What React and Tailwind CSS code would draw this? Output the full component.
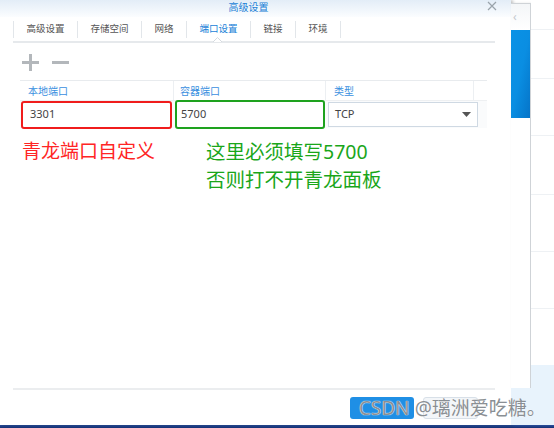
import React from 'react';

const cjk = { fontFamily: '"Noto Sans", "Noto Sans CJK SC", sans-serif' };
const tabs = ['高级设置', '存储空间', '网络', '端口设置', '链接', '环境'];

function Tab({ label, active }) {
  return (
    <div className="relative flex h-full items-center">
      <div
        className={`px-[12.5px] text-[9.5px] leading-none ${active ? 'text-[#1a82d8]' : 'text-[#555]'}`}
      >
        {label}
      </div>
      <div className="h-[17px] w-px bg-[#e2e6ea]" />
      {active && (
        <div className="absolute bottom-[-1px] left-[26px] h-[5px] w-[9px]">
          <svg width="9" height="5" viewBox="0 0 9 5">
            <path d="M0 5 L4.5 0.5 L9 5" fill="#fff" stroke="#d6dbe0" strokeWidth="1" />
          </svg>
        </div>
      )}
    </div>
  );
}

function Dialog() {
  return (
    <div className="flex h-[425px] w-[511px] flex-col bg-white shadow-[2px_0_3px_rgba(0,0,0,0.25)]">
      {/* title bar */}
      <div className="flex h-[17px] items-start bg-gradient-to-b from-[#e3edf7] to-[#fbfdff]">
        <div className="flex-1" />
        <div className="pt-[1px] text-[10px] leading-[12px] text-[#1a7fd6]">高级设置</div>
        <div className="flex flex-1 justify-end pr-[14px] pt-[1px]">
          <svg width="10" height="10" viewBox="0 0 10 10">
            <path d="M1 1 L9 9 M9 1 L1 9" stroke="#9aa3ab" strokeWidth="1.2" />
          </svg>
        </div>
      </div>

      {/* tabs */}
      <div className="mx-[13px] flex h-[26px] w-[482px] items-center border-b-2 border-[#e6e9ec]">
        <div className="h-[17px] w-px bg-[#e2e6ea]" />
        {tabs.map((t) => (
          <Tab key={t} label={t} active={t === '端口设置'} />
        ))}
      </div>

      {/* toolbar */}
      <div className="flex items-center gap-[13px] pl-[22px] pt-[11px]">
        <svg width="17" height="17" viewBox="0 0 17 17">
          <path d="M8.5 0 V17 M0 8.5 H17" stroke="#b3b7bb" strokeWidth="3" />
        </svg>
        <svg width="17" height="17" viewBox="0 0 17 17">
          <path d="M0 8.5 H17" stroke="#b3b7bb" strokeWidth="3" />
        </svg>
      </div>

      {/* table */}
      <div className="ml-[20px] mt-[9px] w-[467px] border-t border-[#e8ebee]">
        <div className="flex h-[20px] border-b border-[#eef0f2] text-[10px] leading-none text-[#3a8fe0]">
          <div className="flex w-[154px] items-center border-r border-[#eceff2] pl-[8px]">本地端口</div>
          <div className="flex w-[152px] items-center border-r border-[#eceff2] pl-[6px]">容器端口</div>
          <div className="flex w-[148px] items-center border-r border-[#eceff2] pl-[8px]">类型</div>
          <div className="flex-1" />
        </div>
        <div className="flex h-[27px] items-center bg-[#fafbfc] text-[11px] text-[#444]">
          <div className="ml-[1px] flex h-[28px] w-[151px] items-center rounded-[3px] border-2 border-[#f01c1c] bg-white pl-[7px]">
            3301
          </div>
          <div className="ml-[3px] flex h-[29px] w-[150px] items-center rounded-[3px] border-2 border-[#1ea21e] bg-white pl-[4px]">
            5700
          </div>
          <div className="ml-[3px] flex h-[25px] w-[150px] items-center justify-between border border-[#cfd9e3] bg-white pl-[6px] pr-[6px]">
            <span>TCP</span>
            <svg width="9" height="5" viewBox="0 0 9 5">
              <path d="M0 0 H9 L4.5 5 Z" fill="#555" />
            </svg>
          </div>
        </div>
      </div>

      {/* annotations */}
      <div className="flex pt-[9px] text-[19px] leading-[28px]">
        <div className="w-[206px] pl-[22px] text-[#ff2525]">青龙端口自定义</div>
        <div className="pt-[1px] text-[19.5px] text-[#1aa61a]">
          <div>这里必须填写5700</div>
          <div>否则打不开青龙面板</div>
        </div>
      </div>

      <div className="flex-1" />

      {/* footer */}
      <div className="mx-[13px] w-[482px] border-t-2 border-[#ebedef]" />
      <div className="flex h-[35px] items-start pl-[350px] pt-[7px]">
        <div className="relative flex">
          <div className="h-[22px] w-[64px] rounded-[3px] bg-[#1f8fe5]" />
          <div className="ml-[9px] h-[22px] w-[55px] rounded-[3px] border border-[#d8e0e8] bg-[#f3f6f9]" />
          <div
            className="absolute left-[9px] top-[-3px] whitespace-nowrap text-[19px] leading-[28px] text-[#8a8f94] [text-shadow:0_0_1px_#fff,0_0_1px_#fff]"
          >
            CSDN @璃洲爱吃糖。
          </div>
        </div>
      </div>
    </div>
  );
}

function BackWindow() {
  return (
    <div className="flex h-[425px] w-[20px] flex-col">
      <div className="mt-[3px] flex h-[385px] flex-col border-r border-t border-[#cfd3d7] bg-white shadow-[2px_1px_3px_rgba(0,0,0,0.2)]">
        <div className="flex h-[26px] items-center bg-gradient-to-b from-[#f4f6f8] to-[#ffffff] pl-[2px] text-[12px] text-[#c5c9cd]">
          ‹
        </div>
        <div className="h-[88px] bg-gradient-to-br from-[#0a92e6] via-[#0a8ee2] to-[#0674c8]" />
        <div className="flex-1" />
      </div>
      <div className="flex-1 bg-[#e8f3fc]" />
    </div>
  );
}

function PageStrip() {
  const rows = [30, 49, 57, 59, 57, 57];
  return (
    <div className="flex h-[425px] flex-1 flex-col bg-white">
      {rows.map((h, i) => (
        <div key={i} className="border-b border-[#eef1f4]" style={{ height: h }} />
      ))}
      <div className="h-[56px]" />
      <div className="flex-1 bg-[#e8f3fc]" />
    </div>
  );
}

export default function App() {
  return (
    <div className="h-[428px] w-[554px] overflow-hidden bg-white" style={cjk}>
      <div className="flex">
        <Dialog />
        <BackWindow />
        <PageStrip />
      </div>
      <div className="h-[3px] bg-gradient-to-b from-[#2a4f9c] to-[#142f74]" />
    </div>
  );
}
